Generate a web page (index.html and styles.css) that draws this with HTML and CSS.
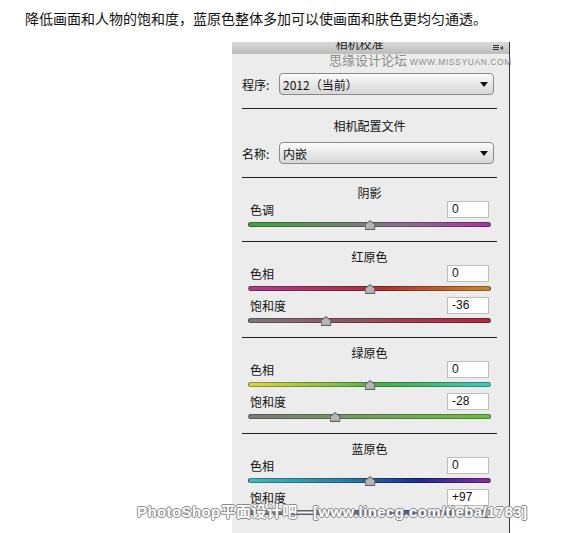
FILE: index.html
```html
<!DOCTYPE html>
<html lang="zh-CN">
<head>
    <meta charset="UTF-8">
    <meta name="viewport" content="width=device-width, initial-scale=1.0">
    <title>相机校准</title>
    <link rel="stylesheet" href="styles.css">
</head>
<body>
    <p class="intro">降低画面和人物的饱和度，蓝原色整体多加可以使画面和肤色更均匀通透。</p>

    <div class="panel">
        <div class="panel-head">
            <span>相机校准</span>
            <svg class="menu-icon" width="10" height="6" viewBox="0 0 10 6">
                <path d="M0 0.5h6M0 2.5h6M0 4.5h6" stroke="#333" stroke-width="1"/>
                <path d="M10 1v4l-3-2z" fill="#333"/>
            </svg>
        </div>
        <div class="mark-top">思缘设计论坛 <small>WWW.MISSYUAN.COM</small></div>

        <div class="field first">
            <label>程序:</label>
            <div class="select"><span>2012（当前）</span><i class="arrow"></i></div>
        </div>
        <div class="rule"></div>
        <div class="title profile">相机配置文件</div>
        <div class="field second">
            <label>名称:</label>
            <div class="select"><span>内嵌</span><i class="arrow"></i></div>
        </div>

        <!-- 阴影 -->
        <div class="section first-section">
            <div class="title">阴影</div>
            <div class="slider">
                <div class="slider-row"><span>色调</span><div class="value">0</div></div>
                <div class="track-wrap"><div class="track shadow-tint"></div><span class="thumb" style="left: 50%"></span></div>
            </div>
        </div>

        <!-- 红原色 -->
        <div class="section">
            <div class="title">红原色</div>
            <div class="slider">
                <div class="slider-row"><span>色相</span><div class="value">0</div></div>
                <div class="track-wrap"><div class="track red-hue"></div><span class="thumb" style="left: 50%"></span></div>
            </div>
            <div class="slider">
                <div class="slider-row"><span>饱和度</span><div class="value">-36</div></div>
                <div class="track-wrap"><div class="track red-sat"></div><span class="thumb" style="left: 32%"></span></div>
            </div>
        </div>

        <!-- 绿原色 -->
        <div class="section">
            <div class="title">绿原色</div>
            <div class="slider">
                <div class="slider-row"><span>色相</span><div class="value">0</div></div>
                <div class="track-wrap"><div class="track green-hue"></div><span class="thumb" style="left: 50%"></span></div>
            </div>
            <div class="slider">
                <div class="slider-row"><span>饱和度</span><div class="value">-28</div></div>
                <div class="track-wrap"><div class="track green-sat"></div><span class="thumb" style="left: 36%"></span></div>
            </div>
        </div>

        <!-- 蓝原色 -->
        <div class="section">
            <div class="title">蓝原色</div>
            <div class="slider">
                <div class="slider-row"><span>色相</span><div class="value">0</div></div>
                <div class="track-wrap"><div class="track blue-hue"></div><span class="thumb" style="left: 50%"></span></div>
            </div>
            <div class="slider">
                <div class="slider-row"><span>饱和度</span><div class="value">+97</div></div>
                <div class="track-wrap"><div class="track blue-sat"></div><span class="thumb" style="left: 98.5%"></span></div>
            </div>
        </div>
    </div>

    <div class="mark-bottom">PhotoShop平面设计吧—[www.linecg.com/tieba/1783]</div>
</body>
</html>
```

FILE: styles.css
```css
body {
    margin: 0;
    background-color: #fff;
    font-family: "Noto Sans CJK SC", sans-serif;
    color: #111;
    position: relative;
}
.intro {
    margin: 0;
    padding: 10px 0 0 25px;
    font-size: 14px;
    line-height: 16px;
}

/* Camera calibration panel */
.panel {
    position: relative;
    width: 278px;
    box-sizing: border-box;
    margin: 16px 0 0 232px;
    padding: 0 12px 30px 10px;
    background-color: #ececec;
    border-right: 1px solid #333;
    font-size: 12px;
}
.panel-head {
    position: relative;
    height: 12px;
    margin: 0 -12px 0 -10px;
    padding-right: 22px;
    overflow: hidden;
    background: linear-gradient(#dadada, #bcbcbc);
    text-align: center;
}
.panel-head span {
    display: block;
    line-height: 12px;
    transform: translateY(-4px);
    color: #222;
}
.menu-icon {
    position: absolute;
    right: 6px;
    top: 3px;
}
.mark-top {
    position: absolute;
    top: 11px;
    right: -3px;
    color: #8c8c8c;
    font-size: 13px;
    line-height: 14px;
    white-space: nowrap;
}
.mark-top small {
    font-family: "Liberation Sans", sans-serif;
    font-size: 8.5px;
    letter-spacing: 0.6px;
}

.field {
    display: flex;
    align-items: center;
}
.field.first {
    margin-top: 19px;
}
.field.second {
    margin-top: 8px;
}
.field label {
    width: 37px;
}
.select {
    flex: 1;
    display: flex;
    align-items: center;
    justify-content: space-between;
    height: 22px;
    box-sizing: border-box;
    margin-right: 3px;
    padding: 0 5px 0 3px;
    border: 1px solid #8a8a8a;
    border-radius: 4px;
    background: linear-gradient(#fbfbfb, #e8e8e8 50%, #d8d8d8);
}
.arrow {
    width: 0;
    height: 0;
    border-left: 4px solid transparent;
    border-right: 4px solid transparent;
    border-top: 5px solid #111;
}
.rule {
    margin-top: 13px;
    border-top: 1px solid #222;
}
.title {
    text-align: center;
    line-height: 16px;
}
.title.profile {
    margin-top: 9px;
}

.section {
    border-top: 1px solid #222;
    padding: 7px 0 8px;
}
.section.first-section {
    margin-top: 13px;
}
.slider {
    padding: 0 6px;
}
.slider-row {
    display: flex;
    align-items: center;
    justify-content: space-between;
    height: 17px;
}
.slider-row span {
    padding-left: 2px;
}
.value {
    width: 42px;
    height: 17px;
    box-sizing: border-box;
    margin-right: 2px;
    padding-left: 4px;
    border: 1px solid #bdbdbd;
    background-color: #fff;
    font-family: "Liberation Sans", sans-serif;
    line-height: 15px;
}
.track-wrap {
    position: relative;
    height: 15px;
    box-sizing: border-box;
    padding-top: 4px;
}
.track {
    height: 5px;
    box-sizing: border-box;
    border: 1px solid rgba(0, 0, 0, 0.3);
    border-radius: 3px;
}
.thumb {
    position: absolute;
    top: 2px;
    width: 11px;
    height: 10px;
    transform: translateX(-50%);
    background: url("data:image/svg+xml;utf8,<svg xmlns='http://www.w3.org/2000/svg' width='11' height='10'><path d='M5.5 0.6L10.4 4.4V9.4H0.6V4.4Z' fill='%23b4b4b4' stroke='%23555' stroke-width='1'/></svg>") no-repeat;
}

/* slider colours */
.shadow-tint { background: linear-gradient(to right, #3da53d, #6a8a6a 30%, #7c7c7c 50%, #8e6a8e 70%, #a632a6); }
.red-hue { background: linear-gradient(to right, #a83c8c, #b03048 45%, #b03030 55%, #c88a2c); }
.red-sat { background: linear-gradient(to right, #7a7a7a, #a03c50 70%, #b02840); }
.green-hue { background: linear-gradient(to right, #d8d440, #88c048 35%, #4cb048 55%, #40c8c0); }
.green-sat { background: linear-gradient(to right, #7a7a7a, #74a858 60%, #6cc03c); }
.blue-hue { background: linear-gradient(to right, #40bcbc, #2c7ea8 40%, #1c2c90 70%, #8a2c9c); }
.blue-sat { background: linear-gradient(to right, #7a7a7a, #3050b8); }

.mark-bottom {
    position: absolute;
    left: 137px;
    top: 503px;
    font-family: "Liberation Sans", "Noto Sans CJK SC", sans-serif;
    font-size: 15px;
    font-weight: bold;
    line-height: 18px;
    letter-spacing: 0.4px;
    color: #fff;
    white-space: nowrap;
    text-shadow: 1px 0 #8a8a8a, -1px 0 #8a8a8a, 0 1px #8a8a8a, 0 -1px #8a8a8a;
}
```
